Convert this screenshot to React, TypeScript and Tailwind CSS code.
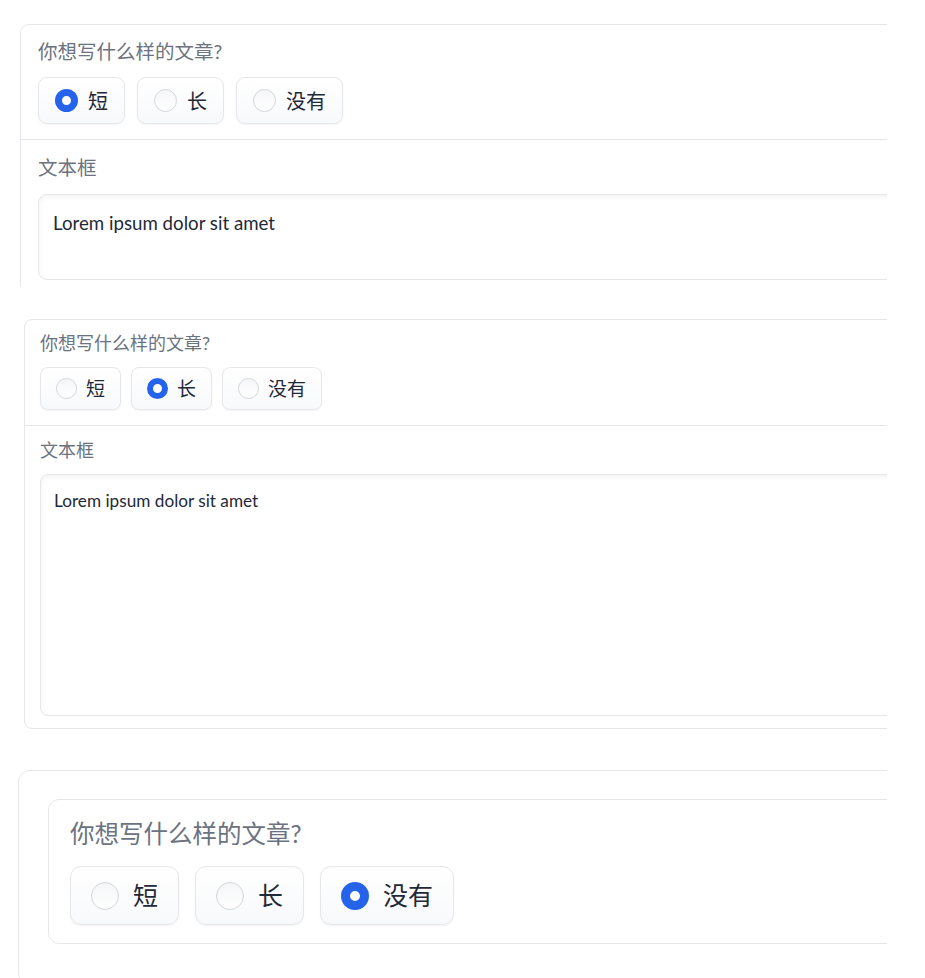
import { useState } from 'react'

const CJK = "font-['Lato','Noto_Sans_CJK_SC',sans-serif]"

type Size = {
  btnRow: string
  btn: string
  circle: string
  checked: string
  optText: string
}

const SIZES: Record<'md' | 'lg' | 'xl', Size> = {
  md: {
    btnRow: 'mt-[10px] gap-[10px]',
    btn: 'h-[43px] pl-[15px] pr-[15px] gap-[9px] rounded-[8px]',
    circle: 'w-[21px] h-[21px]',
    checked: 'border-[6.5px]',
    optText: 'text-[19px]',
  },
  lg: {
    btnRow: 'mt-[11px] gap-[12px]',
    btn: 'h-[47px] pl-[16px] pr-[16px] gap-[10px] rounded-[9px]',
    circle: 'w-[23px] h-[23px]',
    checked: 'border-[7px]',
    optText: 'text-[20px]',
  },
  xl: {
    btnRow: 'mt-[14px] gap-[16px]',
    btn: 'h-[59px] pl-[20px] pr-[20px] gap-[14px] rounded-[11px]',
    circle: 'w-[28px] h-[28px]',
    checked: 'border-[9px]',
    optText: 'text-[25px]',
  },
}

const OPTIONS = ['短', '长', '没有']

const RadioGroup = ({ size, initial }: { size: Size; initial: string }) => {
  const [value, setValue] = useState(initial)
  return (
    <div className={`flex ${size.btnRow}`}>
      {OPTIONS.map((opt) => (
        <button
          key={opt}
          onClick={() => setValue(opt)}
          className={`flex items-center border border-[#e5e7eb] bg-gradient-to-b from-white to-[#f8f9fb] shadow-[0_1px_2px_rgba(0,0,0,0.05)] ${size.btn}`}
        >
          {value === opt ? (
            <span className={`block rounded-full border-[#2563eb] bg-white ${size.circle} ${size.checked}`} />
          ) : (
            <span className={`block rounded-full border border-[#d4d6dc] bg-gradient-to-b from-[#f5f6f8] to-white ${size.circle}`} />
          )}
          <span className={`text-[#1f2937] leading-none ${size.optText}`}>{opt}</span>
        </button>
      ))}
    </div>
  )
}

const App = () => {
  return (
    <div className={`bg-white min-h-screen ${CJK}`}>
      <div className="w-[887px] overflow-hidden">
        {/* first block: short, cut off at the bottom */}
        <div className="ml-[20px] pt-[24px] h-[287px] overflow-hidden">
          <div className="w-[1000px] border border-[#e5e7eb] rounded-[9px] bg-white">
            <div className="px-[17px] pt-[12px] pb-[15px]">
              <div className="text-[19.5px] leading-[29px] text-[#6b7280]">你想写什么样的文章?</div>
              <RadioGroup size={SIZES.lg} initial="短" />
            </div>
            <div className="border-t border-[#e5e7eb] px-[17px] pt-[13px] pb-[14px]">
              <div className="text-[19.5px] leading-[29px] text-[#6b7280]">文本框</div>
              <div className="mt-[12px] h-[86px] border border-[#e5e7eb] rounded-[9px] shadow-[inset_0_2px_5px_rgba(0,0,0,0.05)] px-[14px] pt-[15px] text-[18.7px] leading-[26px] text-[#1f2937]">
                Lorem ipsum dolor sit amet
              </div>
            </div>
          </div>
        </div>

        {/* second block: long */}
        <div className="ml-[24px] mt-[32px] w-[1000px] border border-[#e5e7eb] rounded-[8px] bg-white">
          <div className="px-[15px] pt-[10px] pb-[15px]">
            <div className="text-[18px] leading-[27px] text-[#6b7280]">你想写什么样的文章?</div>
            <RadioGroup size={SIZES.md} initial="长" />
          </div>
          <div className="border-t border-[#e5e7eb] px-[15px] pt-[11px] pb-[12px]">
            <div className="text-[18px] leading-[27px] text-[#6b7280]">文本框</div>
            <div className="mt-[10px] h-[242px] border border-[#e5e7eb] rounded-[8px] shadow-[inset_0_2px_5px_rgba(0,0,0,0.05)] px-[13px] pt-[14px] text-[17.2px] leading-[24px] text-[#1f2937]">
              Lorem ipsum dolor sit amet
            </div>
          </div>
        </div>

        {/* third block: none, nested */}
        <div className="ml-[18px] mt-[41px] w-[1000px] border border-[#e5e7eb] rounded-[12px] bg-white pl-[29px] pt-[28px] pb-[40px]">
          <div className="border border-[#e5e7eb] rounded-[11px] bg-white pl-[21px] pt-[16px] pb-[18px]">
            <div className="text-[24.5px] leading-[36px] text-[#6b7280]">你想写什么样的文章?</div>
            <RadioGroup size={SIZES.xl} initial="没有" />
          </div>
        </div>
      </div>
    </div>
  )
}

export default App
